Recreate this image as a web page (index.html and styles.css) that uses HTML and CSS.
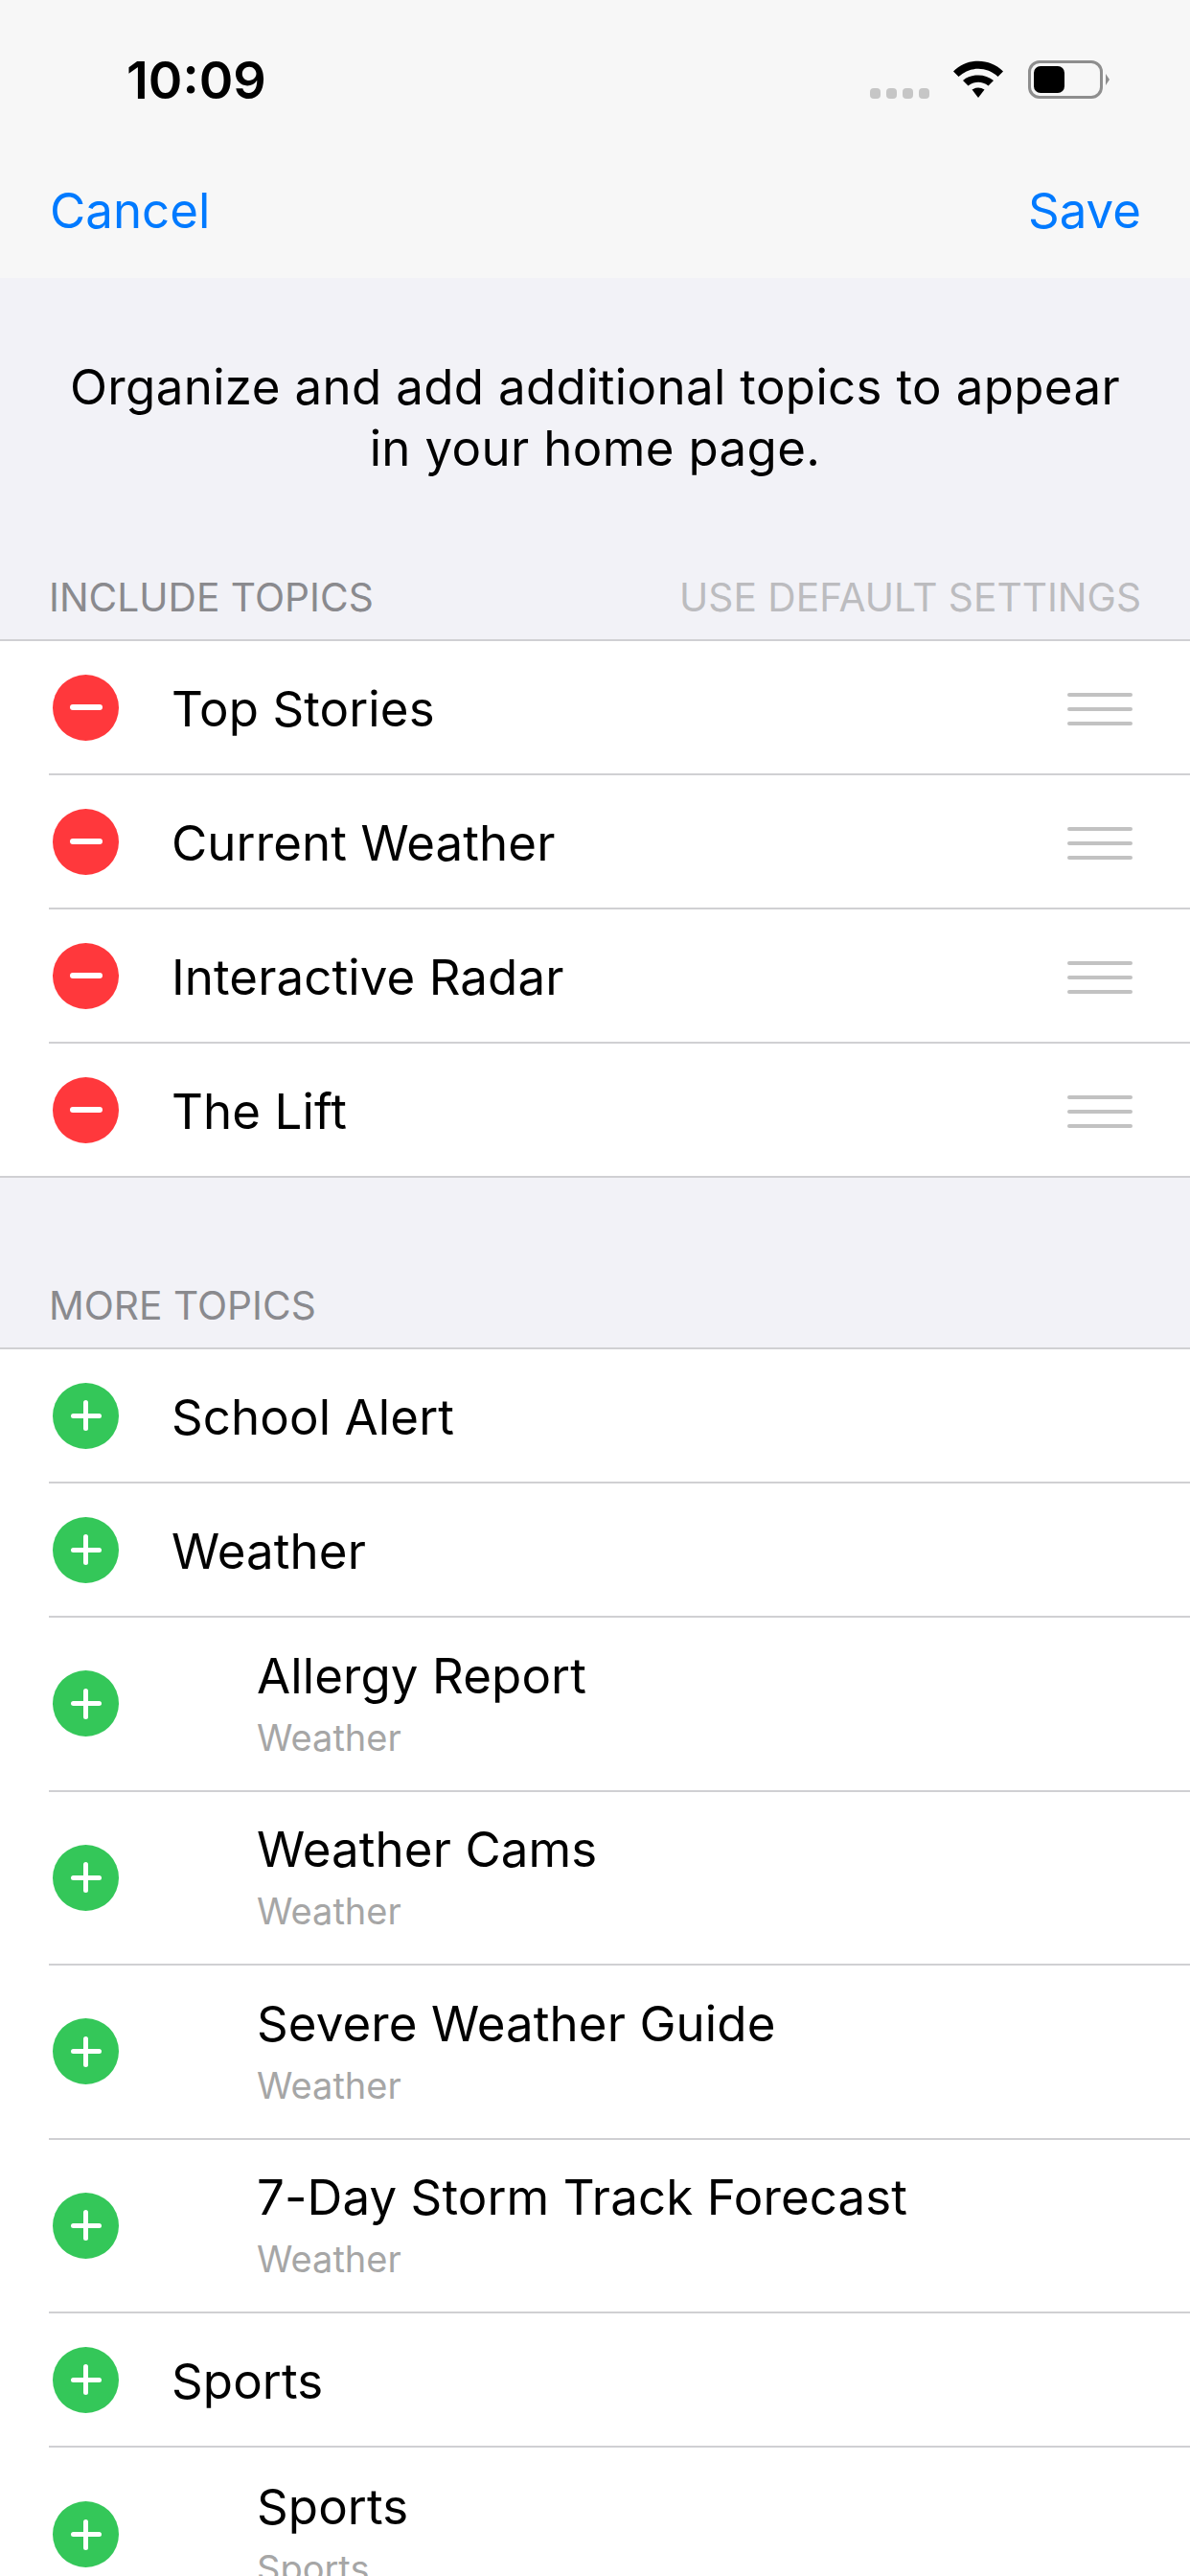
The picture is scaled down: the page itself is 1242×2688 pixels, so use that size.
FILE: index.html
```html
<!DOCTYPE html>
<html lang="en">
<head>
<meta charset="UTF-8">
<meta name="viewport" content="width=device-width, initial-scale=1.0">
<title>Edit Topics</title>
<link rel="stylesheet" href="styles.css">
</head>
<body>

<header class="top">
  <div class="status">
    <span class="time">10:09</span>
    <div class="status-icons">
      <div class="signal"><i></i><i></i><i></i><i></i></div>
      <svg class="wifi" width="54" height="40" viewBox="0 0 54 40">
        <path d="M1 11.5 C15 -3 39 -3 53 11.5 L47.5 17 C36 6 18 6 6.500 17 Z" fill="#000"/>
        <path d="M11 21 C19.500 13.500 34.500 13.500 43 21 L37.500 26.500 C31 21.500 23 21.500 16.500 26.500 Z" fill="#000"/>
        <path d="M20.500 30.500 C24.500 27.800 29.500 27.800 33.500 30.500 L27 39 Z" fill="#000"/>
      </svg>
      <div class="battery">
        <div class="battery-body"><div class="battery-level"></div></div>
        <div class="battery-tip"></div>
      </div>
    </div>
  </div>
  <nav class="nav">
    <span>Cancel</span>
    <span>Save</span>
  </nav>
</header>

<p class="intro">Organize and add additional topics to appear<br>in your home page.</p>

<div class="section-head first">
  <span>INCLUDE TOPICS</span>
  <span class="muted">USE DEFAULT SETTINGS</span>
</div>
<ul class="group">
  <li class="row"><span class="badge remove"></span><span class="title">Top Stories</span><span class="handle"><i></i><i></i><i></i></span></li>
  <li class="row"><span class="badge remove"></span><span class="title">Current Weather</span><span class="handle"><i></i><i></i><i></i></span></li>
  <li class="row"><span class="badge remove"></span><span class="title">Interactive Radar</span><span class="handle"><i></i><i></i><i></i></span></li>
  <li class="row"><span class="badge remove"></span><span class="title">The Lift</span><span class="handle"><i></i><i></i><i></i></span></li>
</ul>

<div class="section-head second">
  <span>MORE TOPICS</span>
</div>
<ul class="group">
  <li class="row"><span class="badge add"></span><span class="title">School Alert</span></li>
  <li class="row"><span class="badge add"></span><span class="title">Weather</span></li>
  <li class="row sub"><span class="badge add"></span><div class="sub-text"><span class="title">Allergy Report</span><span class="parent">Weather</span></div></li>
  <li class="row sub"><span class="badge add"></span><div class="sub-text"><span class="title">Weather Cams</span><span class="parent">Weather</span></div></li>
  <li class="row sub"><span class="badge add"></span><div class="sub-text"><span class="title">Severe Weather Guide</span><span class="parent">Weather</span></div></li>
  <li class="row sub"><span class="badge add"></span><div class="sub-text"><span class="title">7-Day Storm Track Forecast</span><span class="parent">Weather</span></div></li>
  <li class="row"><span class="badge add"></span><span class="title">Sports</span></li>
  <li class="row sub"><span class="badge add"></span><div class="sub-text"><span class="title">Sports</span><span class="parent">Sports</span></div></li>
</ul>

</body>
</html>
```

FILE: styles.css
```css
html, body {
  margin: 0;
  padding: 0;
  height: 2688px;
  overflow: hidden;
}
body {
  background-color: #f2f2f7;
  color: #000;
  font-family: Inter, "Liberation Sans", Arial, sans-serif;
}
.top {
  background-color: #f7f7f7;
  height: 290px;
  box-sizing: border-box;
}
.status {
  display: flex;
  justify-content: space-between;
  align-items: center;
  height: 166px;
  padding: 0 84px 0 132px;
  box-sizing: border-box;
}
.time {
  font-size: 54px;
  font-weight: 600;
}
.status-icons {
  display: flex;
  align-items: center;
}
.signal {
  display: flex;
  gap: 6px;
  align-self: flex-end;
  margin: 0 24px 0 0;
}
.signal i {
  width: 11px;
  height: 11px;
  border-radius: 4px;
  background-color: #c6c6c6;
}
.wifi {
  margin-right: 25px;
}
.battery {
  display: flex;
  align-items: center;
}
.battery-body {
  width: 78px;
  height: 40px;
  box-sizing: border-box;
  border: 3px solid #8e8e8e;
  border-radius: 12px;
  padding: 3px;
}
.battery-level {
  width: 32px;
  height: 100%;
  border-radius: 7px;
  background-color: #000;
}
.battery-tip {
  width: 0;
  height: 0;
  margin-left: 3px;
  border-left: 4px solid #8e8e8e;
  border-top: 6px solid transparent;
  border-bottom: 6px solid transparent;
}
.nav {
  display: flex;
  justify-content: space-between;
  padding: 23px 51px 0 52px;
  color: #007aff;
  font-size: 51px;
  line-height: 62px;
}
.intro {
  margin: 0;
  padding-top: 82px;
  text-align: center;
  font-size: 51px;
  line-height: 64px;
  letter-spacing: 0.35px;
}
.section-head {
  display: flex;
  justify-content: space-between;
  padding: 0 51px;
  color: #8a8a8e;
  font-size: 40.7px;
  line-height: 48px;
}
.section-head.first {
  margin-top: 100px;
  padding-bottom: 19px;
}
.section-head.second {
  margin-top: 110px;
  padding-bottom: 19px;
}
.muted {
  color: #bcbcbf;
}
.group {
  list-style: none;
  margin: 0;
  padding: 0;
  background-color: #fff;
  border-top: 2px solid #d0d0d3;
  border-bottom: 2px solid #d0d0d3;
}
.row {
  display: flex;
  align-items: center;
  height: 140px;
  box-sizing: border-box;
  margin-left: 51px;
  padding: 0 52px 0 4px;
  border-bottom: 2px solid #d0d0d3;
}
.row:last-child {
  border-bottom: none;
  height: 138px;
}
.row.sub {
  height: 181.5px;
}
.badge {
  display: grid;
  place-items: center;
  flex: none;
  width: 69px;
  height: 69px;
  border-radius: 50%;
  margin-right: 55px;
}
.badge::before,
.badge::after {
  content: "";
  grid-area: 1 / 1;
  background-color: #fff;
  border-radius: 3px;
}
.remove {
  background-color: #ff383c;
}
.remove::before {
  width: 34px;
  height: 6px;
}
.remove::after {
  display: none;
}
.add {
  background-color: #34c759;
}
.add::before {
  width: 32px;
  height: 5px;
}
.add::after {
  width: 5px;
  height: 32px;
}
.title {
  margin-top: 3px;
  font-size: 51px;
  line-height: 62px;
  letter-spacing: 0.1px;
}
.handle {
  display: flex;
  flex-direction: column;
  gap: 11px;
  margin: 3px 8px 0 auto;
}
.handle i {
  display: block;
  width: 68px;
  height: 4px;
  border-radius: 2px;
  background-color: #c2c2c2;
}
.sub-text {
  display: flex;
  flex-direction: column;
  padding: 0 0 5px 89px;
}
.parent {
  margin-top: 10px;
  color: #a6a6a6;
  font-size: 38px;
  line-height: 46px;
}
```
